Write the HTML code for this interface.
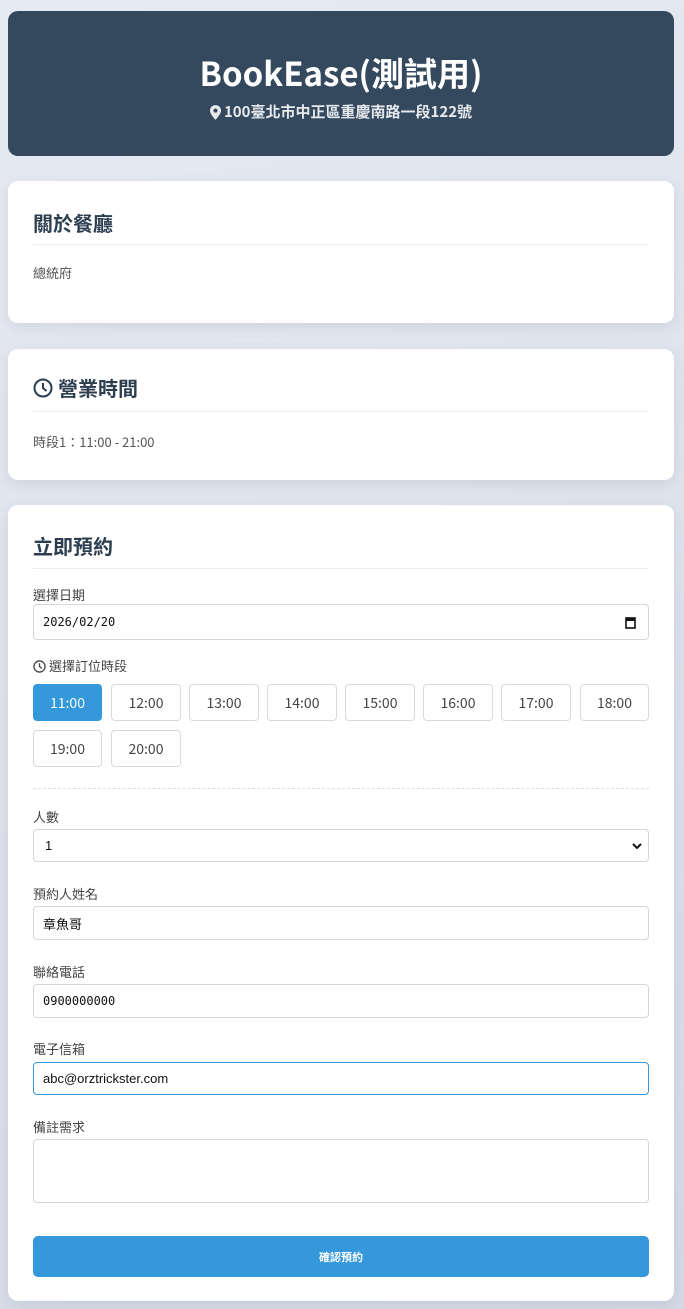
<!DOCTYPE html>
<html><head><meta charset="utf-8"><style>
*{box-sizing:border-box;margin:0;padding:0}
body{width:684px;height:1309px;position:relative;overflow:hidden;background:linear-gradient(160deg,#e6eaf3 0%,#d3dae6 100%);font-family:"Noto Sans CJK TC",sans-serif;color:#2c3e50}
.a{position:absolute}
.card{position:absolute;left:8px;width:666px;background:#fff;border-radius:10px;box-shadow:0 4px 14px rgba(0,0,0,.08)}
.hd{position:absolute;left:25px;right:25px;font-size:20px;font-weight:bold;color:#2c3e50;border-bottom:1px solid #e8ebef;display:flex;align-items:center;gap:5px;line-height:28px}
.lbl{position:absolute;left:33px;font-size:13px;color:#444;line-height:18px}
.inp{position:absolute;left:33px;width:616px;border:1px solid #d6d6d6;border-radius:4px;background:#fff;font-size:13px;color:#111;display:flex;align-items:center;padding-left:9px;font-family:"Liberation Sans","Noto Sans CJK TC",sans-serif}
.tb{position:absolute;width:70px;height:37px;border:1px solid #d9d9d9;border-radius:4px;font-size:14px;color:#444;display:flex;align-items:center;justify-content:center;background:#fff}
</style></head><body>
<div class="a" style="left:8px;top:11px;width:666px;height:145px;background:#34495e;border-radius:10px;color:#fff;text-align:center">
<div style="margin-top:39px;font-size:33px;font-weight:bold;line-height:44px">BookEase(測試用)</div>
<div style="margin-top:8px;font-size:15px;font-weight:bold;color:#e6e9ee;display:flex;justify-content:center;align-items:center;gap:3px;line-height:20px">
<svg width="11" height="15" viewBox="0 0 12 16"><path d="M6 0C2.7 0 0 2.6 0 5.8 0 10 6 16 6 16s6-6 6-10.2C12 2.6 9.3 0 6 0zm0 8.2a2.3 2.3 0 1 1 0-4.6 2.3 2.3 0 0 1 0 4.6z" fill="#e6e9ee"/></svg>100臺北市中正區重慶南路一段122號</div>
</div>

<div class="card" style="top:181px;height:142px">
<div class="hd" style="top:27px;height:37px;padding-bottom:7px">關於餐廳</div>
<div class="a" style="left:25px;top:82px;font-size:13px;color:#555">總統府</div>
</div>

<div class="card" style="top:349px;height:131px">
<div class="hd" style="top:24px;height:39px;padding-bottom:8px"><svg width="20" height="20" viewBox="0 0 20 20"><circle cx="10" cy="10" r="8.5" fill="none" stroke="#2c3e50" stroke-width="2"/><path d="M10 5v5l3.5 3" fill="none" stroke="#2c3e50" stroke-width="2"/></svg>營業時間</div>
<div class="a" style="left:25px;top:83px;font-size:13px;color:#555">時段1：11:00 - 21:00</div>
</div>

<div class="card" style="top:505px;height:796px"></div>
<div class="hd" style="left:33px;right:35px;top:531px;height:38px;padding-bottom:8px">立即預約</div>

<div class="lbl" style="top:586px">選擇日期</div>
<div class="inp" style="top:604px;height:36px;font-family:'DejaVu Sans Mono',monospace;font-size:12px">2026/02/20
<svg class="a" style="right:12px;top:11px" width="11" height="13" viewBox="0 0 11 13"><rect x="1" y="2" width="9" height="10" fill="none" stroke="#111" stroke-width="1.6"/><rect x="1" y="2" width="9" height="3" fill="#111"/></svg></div>

<div class="lbl" style="top:657px;display:flex;align-items:center;gap:3px"><svg width="13" height="13" viewBox="0 0 14 14"><circle cx="7" cy="7" r="6" fill="none" stroke="#444" stroke-width="1.4"/><path d="M7 3.5V7l2.5 2" fill="none" stroke="#444" stroke-width="1.4"/></svg>選擇訂位時段</div>

<div class="tb" style="left:33px;top:684px;width:69px;background:#3498db;border-color:#3498db;color:#fff">11:00</div>
<div class="tb" style="left:111px;top:684px">12:00</div>
<div class="tb" style="left:189px;top:684px">13:00</div>
<div class="tb" style="left:267px;top:684px">14:00</div>
<div class="tb" style="left:345px;top:684px">15:00</div>
<div class="tb" style="left:423px;top:684px">16:00</div>
<div class="tb" style="left:501px;top:684px">17:00</div>
<div class="tb" style="left:580px;top:684px;width:69px">18:00</div>
<div class="tb" style="left:33px;top:730px;width:69px">19:00</div>
<div class="tb" style="left:111px;top:730px">20:00</div>

<div class="a" style="left:33px;top:788px;width:616px;border-top:1px dashed #ddd"></div>

<div class="lbl" style="top:808px">人數</div>
<div class="inp" style="top:829px;height:33px;padding-left:11px">1
<svg class="a" style="right:6px;top:12px" width="10" height="8" viewBox="0 0 10 8"><path d="M1 2l4 4 4-4" fill="none" stroke="#111" stroke-width="2"/></svg></div>

<div class="lbl" style="top:885px">預約人姓名</div>
<div class="inp" style="top:906px;height:34px">章魚哥</div>

<div class="lbl" style="top:963px">聯絡電話</div>
<div class="inp" style="top:984px;height:34px;font-family:'DejaVu Sans Mono',monospace;font-size:12px">0900000000</div>

<div class="lbl" style="top:1040px">電子信箱</div>
<div class="inp" style="top:1062px;height:33px;border-color:#3498db">abc@orztrickster.com</div>

<div class="lbl" style="top:1118px">備註需求</div>
<div class="inp" style="top:1139px;height:64px"></div>

<div class="a" style="left:33px;top:1236px;width:616px;height:41px;background:#3498db;border-radius:5px;color:#fff;font-size:11px;font-weight:bold;display:flex;align-items:center;justify-content:center">確認預約</div>
</body></html>
